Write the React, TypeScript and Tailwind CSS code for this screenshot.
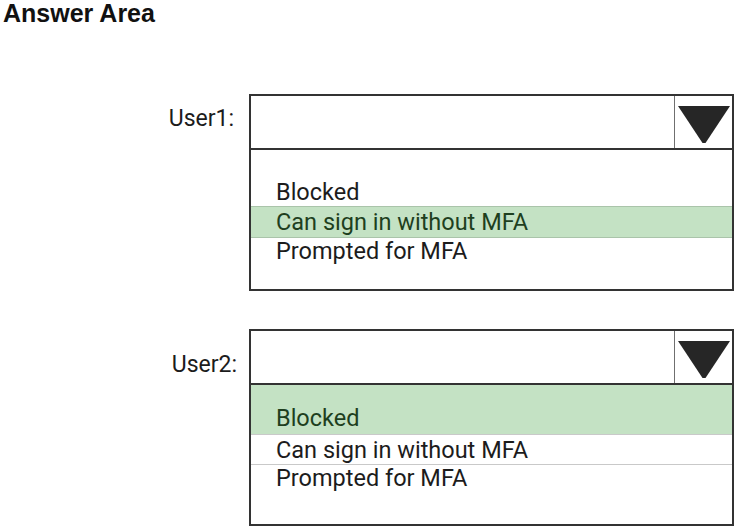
import React from "react";

function Arrow() {
  return (
    <svg width="52" height="38" viewBox="0 0 52 38" className="block">
      <polygon points="0,0 52,0 27.5,37 24.5,37" fill="#262626" />
    </svg>
  );
}

function Header() {
  return (
    <div className="h-[56px] border-2 border-[#333] flex">
      <div className="flex-1" />
      <div className="w-[58px] border-l border-[#6f6f6f] flex justify-center pt-[10px]">
        <Arrow />
      </div>
    </div>
  );
}

export default function App() {
  return (
    <div className="w-[735px] h-[528px] bg-white text-[#1c1c1c] font-['Roboto',sans-serif] overflow-hidden">
      <div className="pl-[3px] pt-[1px] h-[25px] text-[25px] leading-[25px] font-bold text-[#111] font-['Liberation_Sans',Arial,sans-serif]">Answer Area</div>

      <div className="mt-[69px] flex">
        <div className="w-[249px] pr-[15px] text-right pt-[11px] text-[23px] leading-[28px]">User1:</div>
        <div className="w-[485px]">
          <Header />
          <div className="h-[141px] border-x-2 border-b-2 border-[#333] pt-[29px] text-[23.5px]">
            <div className="h-[27px] leading-[27px] pl-[25px]">Blocked</div>
            <div className="h-[32px] leading-[30px] pl-[25px] bg-[#c4e2c4] border-y border-[#aac4aa] text-[#1e3f1e]">
              Can sign in without MFA
            </div>
            <div className="h-[26px] leading-[26px] pl-[25px]">Prompted for MFA</div>
          </div>
        </div>
      </div>

      <div className="mt-[38px] flex">
        <div className="w-[249px] pr-[12px] text-right pt-[22px] text-[23px] leading-[28px]">User2:</div>
        <div className="w-[485px]">
          <Header />
          <div className="h-[141px] border-x-2 border-b-2 border-[#333] text-[23.5px]">
            <div className="h-[49px] pt-[17px] bg-[#c4e2c4] text-[#1e3f1e]">
              <div className="h-[32px] leading-[32px] pl-[25px]">Blocked</div>
            </div>
            <div className="h-[30px] leading-[30px] pl-[25px] border-t border-[#c9c9c9]">Can sign in without MFA</div>
            <div className="h-[28px] leading-[26px] pl-[25px] border-t border-[#c9c9c9]">Prompted for MFA</div>
          </div>
        </div>
      </div>
    </div>
  );
}
